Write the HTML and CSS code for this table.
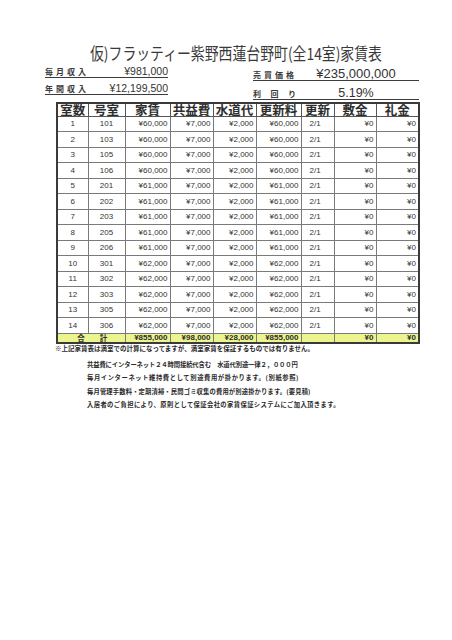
FILE: index.html
```html
<!DOCTYPE html>
<html lang="ja">
<head>
<meta charset="utf-8">
<title>家賃表</title>
<link rel="stylesheet" href="styles.css">
</head>
<body>
<div class="page">
  <h1 class="title"><span>仮)フラッティー紫野西蓮台野町(全14室)家賃表</span></h1>

  <div class="info">
    <div class="info-col left">
      <div class="info-row"><span class="lbl">毎月収入</span><span class="val">¥981,000</span></div>
      <div class="info-row"><span class="lbl">年間収入</span><span class="val">¥12,199,500</span></div>
    </div>
    <div class="info-col right">
      <div class="info-row"><span class="lbl">売買価格</span><span class="val big">¥235,000,000</span></div>
      <div class="info-row"><span class="lbl spaced">利回り</span><span class="val big pct">5.19%</span></div>
    </div>
  </div>

  <table class="rent">
    <colgroup>
      <col class="c-no"><col class="c-room"><col class="c-rent"><col class="c-fee"><col class="c-water"><col class="c-renew-fee"><col class="c-renew"><col class="c-deposit"><col class="c-key">
    </colgroup>
    <thead>
      <tr><th>室数</th><th>号室</th><th>家賃</th><th>共益費</th><th>水道代</th><th>更新料</th><th>更新</th><th>敷金</th><th>礼金</th></tr>
    </thead>
    <tbody>
      <tr><td class="ctr">1</td><td class="ctr">101</td><td>¥60,000</td><td>¥7,000</td><td>¥2,000</td><td>¥60,000</td><td class="rn">2/1</td><td>¥0</td><td>¥0</td></tr>
      <tr><td class="ctr">2</td><td class="ctr">103</td><td>¥60,000</td><td>¥7,000</td><td>¥2,000</td><td>¥60,000</td><td class="rn">2/1</td><td>¥0</td><td>¥0</td></tr>
      <tr><td class="ctr">3</td><td class="ctr">105</td><td>¥60,000</td><td>¥7,000</td><td>¥2,000</td><td>¥60,000</td><td class="rn">2/1</td><td>¥0</td><td>¥0</td></tr>
      <tr><td class="ctr">4</td><td class="ctr">106</td><td>¥60,000</td><td>¥7,000</td><td>¥2,000</td><td>¥60,000</td><td class="rn">2/1</td><td>¥0</td><td>¥0</td></tr>
      <tr><td class="ctr">5</td><td class="ctr">201</td><td>¥61,000</td><td>¥7,000</td><td>¥2,000</td><td>¥61,000</td><td class="rn">2/1</td><td>¥0</td><td>¥0</td></tr>
      <tr><td class="ctr">6</td><td class="ctr">202</td><td>¥61,000</td><td>¥7,000</td><td>¥2,000</td><td>¥61,000</td><td class="rn">2/1</td><td>¥0</td><td>¥0</td></tr>
      <tr><td class="ctr">7</td><td class="ctr">203</td><td>¥61,000</td><td>¥7,000</td><td>¥2,000</td><td>¥61,000</td><td class="rn">2/1</td><td>¥0</td><td>¥0</td></tr>
      <tr><td class="ctr">8</td><td class="ctr">205</td><td>¥61,000</td><td>¥7,000</td><td>¥2,000</td><td>¥61,000</td><td class="rn">2/1</td><td>¥0</td><td>¥0</td></tr>
      <tr><td class="ctr">9</td><td class="ctr">206</td><td>¥61,000</td><td>¥7,000</td><td>¥2,000</td><td>¥61,000</td><td class="rn">2/1</td><td>¥0</td><td>¥0</td></tr>
      <tr><td class="ctr">10</td><td class="ctr">301</td><td>¥62,000</td><td>¥7,000</td><td>¥2,000</td><td>¥62,000</td><td class="rn">2/1</td><td>¥0</td><td>¥0</td></tr>
      <tr><td class="ctr">11</td><td class="ctr">302</td><td>¥62,000</td><td>¥7,000</td><td>¥2,000</td><td>¥62,000</td><td class="rn">2/1</td><td>¥0</td><td>¥0</td></tr>
      <tr><td class="ctr">12</td><td class="ctr">303</td><td>¥62,000</td><td>¥7,000</td><td>¥2,000</td><td>¥62,000</td><td class="rn">2/1</td><td>¥0</td><td>¥0</td></tr>
      <tr><td class="ctr">13</td><td class="ctr">305</td><td>¥62,000</td><td>¥7,000</td><td>¥2,000</td><td>¥62,000</td><td class="rn">2/1</td><td>¥0</td><td>¥0</td></tr>
      <tr><td class="ctr">14</td><td class="ctr">306</td><td>¥62,000</td><td>¥7,000</td><td>¥2,000</td><td>¥62,000</td><td class="rn">2/1</td><td>¥0</td><td>¥0</td></tr>
    </tbody>
    <tfoot>
      <tr class="total"><td colspan="2" class="sum-lbl">合　　計</td><td>¥855,000</td><td>¥98,000</td><td>¥28,000</td><td>¥855,000</td><td></td><td>¥0</td><td>¥0</td></tr>
    </tfoot>
  </table>

  <div class="notes">
    <p class="note-main">※上記家賃表は満室での計算になってますが、満室家賃を保証するものでは有りません。</p>
    <p class="note n1">共益費にインターネット２４時間接続代含む　水道代別途一律２，０００円</p>
    <p class="note n2">毎月インターネット維持費として別途費用が掛かります。(別紙参照)</p>
    <p class="note n3">毎月管理手数料・定期清掃・民間ゴミ収集の費用が別途掛かります。(要見積)</p>
    <p class="note n4">入居者のご負担により、原則として保証会社の家賃保証システムにご加入頂きます。</p>
  </div>
</div>
</body>
</html>
```

FILE: styles.css
```css
html, body {
  margin: 0;
  background: #fff;
}
body {
  width: 452px;
  height: 640px;
  overflow: hidden;
  color: #333;
  font-family: "Liberation Sans", "Noto Sans CJK JP", sans-serif;
}
.page {
  padding-top: 44px;
}
.title {
  margin: 0;
  padding-left: 90px;
  font: 400 16.5px/18px "Noto Sans CJK JP", sans-serif;
  color: #3a3a3a;
  white-space: nowrap;
}
.title span {
  display: inline-block;
  transform: scaleX(0.84);
  transform-origin: left center;
}

/* summary rows */
.info {
  display: flex;
  align-items: flex-start;
}
.info-col {
  display: flex;
  flex-direction: column;
}
.info-col.left {
  margin-left: 45px;
  width: 123px;
  padding-top: 4px;
  gap: 5px;
}
.info-col.right {
  margin-left: 85px;
  width: 166px;
  padding-top: 6px;
  gap: 6px;
}
.info-row {
  display: flex;
  align-items: baseline;
  justify-content: space-between;
  border-bottom: 1px solid #3c3c3c;
  height: 11px;
  line-height: 11px;
  white-space: nowrap;
}
.right .info-row {
  height: 12px;
  line-height: 12px;
}
.lbl {
  font: 700 8px/1 "Noto Sans CJK JP", sans-serif;
  letter-spacing: 3px;
  color: #3a3a3a;
  flex: none;
  white-space: nowrap;
}
.lbl.spaced {
  letter-spacing: 9.5px;
}
.val {
  font-size: 10.5px;
  color: #333;
}
.right .lbl {
  width: 50px;
}
.val.big {
  flex: 1;
  text-align: center;
  font-size: 13px;
  padding-right: 10px;
}
.val.pct {
  font-size: 12.5px;
}

/* table */
.rent {
  margin: 2px 0 0 56px;
  width: 362px;
  table-layout: fixed;
  border-collapse: collapse;
  border: 2px solid #3a3a3a;
}
.c-no { width: 31px; }
.c-room { width: 37px; }
.c-rent { width: 45px; }
.c-fee { width: 43px; }
.c-water { width: 43px; }
.c-renew-fee { width: 45px; }
.c-renew { width: 33px; }
.c-deposit { width: 42px; }
.c-key { width: 43px; }

.rent thead tr {
  height: 13px;
}
.rent th {
  padding: 0;
  font: 700 12.5px/11px "Noto Sans CJK JP", sans-serif;
  color: #2e2e2e;
  text-align: center;
  border: 1px solid #555;
  border-bottom-width: 1.5px;
  white-space: nowrap;
}
.rent tbody tr {
  height: 15.5px;
}
.rent td {
  padding: 0 2px 0 0;
  font-size: 8px;
  line-height: 9px;
  text-align: right;
  color: #333;
  border: 1px solid #7a7a7a;
  white-space: nowrap;
}
.rent td.ctr {
  text-align: center;
  padding: 0;
}
.rent td.rn {
  text-align: left;
  padding-left: 8px;
}
.rent .total {
  height: 10px;
}
.rent .total td {
  background: #ecf48e;
  font-weight: 700;
  line-height: 8px;
  color: #2e2e2e;
  border-top: 1.5px solid #555;
}
.rent .total td.sum-lbl {
  text-align: center;
  padding: 0 0 0 2px;
  font-family: "Noto Sans CJK JP", sans-serif;
  font-size: 7.5px;
}

/* notes */
.notes {
  font-family: "Noto Sans CJK JP", sans-serif;
  font-weight: 700;
  font-size: 6.5px;
  color: #2a2a2a;
}
.notes p {
  margin: 0;
  white-space: nowrap;
}
.note-main {
  padding-left: 55px;
  line-height: 9px;
}
.note {
  padding-left: 87px;
  line-height: 13.4px;
  font-size: 6.3px;
}
.note.n1 {
  margin-top: 5px;
  letter-spacing: -0.1px;
}
.note.n2 {
  letter-spacing: 0.6px;
}
.note.n3 {
  letter-spacing: 0.15px;
}
.note.n4 {
  letter-spacing: 0.4px;
}
```
